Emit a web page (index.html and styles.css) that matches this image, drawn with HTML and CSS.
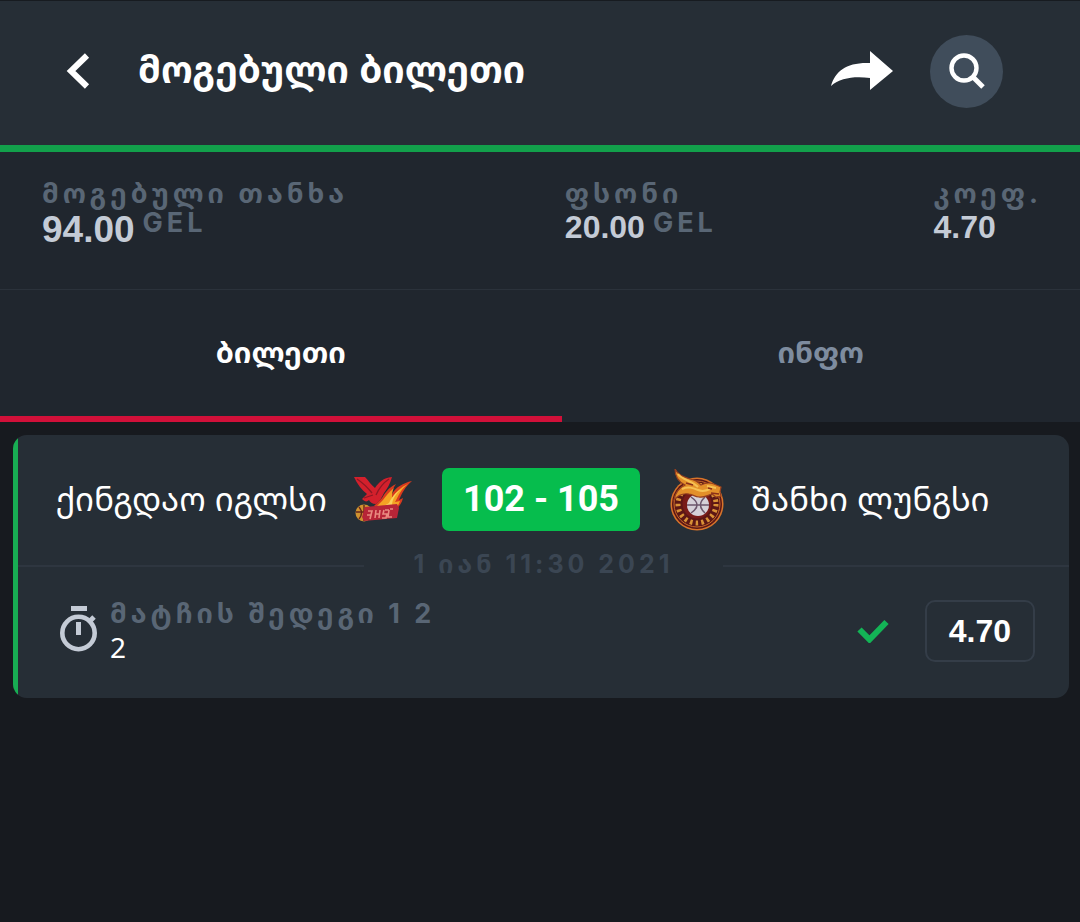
FILE: index.html
```html
<!DOCTYPE html>
<html lang="ka">
<head>
<meta charset="utf-8">
<meta name="viewport" content="width=device-width, initial-scale=1">
<title>მოგებული ბილეთი</title>
<link rel="stylesheet" href="styles.css">
</head>
<body>
<header class="topbar">
  <button class="icon-button back" type="button" aria-label="უკან">
    <svg width="24" height="36" viewBox="0 0 24 36"><path d="M21 2.500 5 18l16 15.500" fill="none" stroke="currentColor" stroke-width="6"/></svg>
  </button>
  <h1 class="title">მოგებული ბილეთი</h1>
  <button class="icon-button share" type="button" aria-label="გაზიარება">
    <svg width="64" height="40" viewBox="0 0 64 40"><path d="M40 0 63 20 40 39V27C24 25 10 27 1 35 5 20 17 11 40 12Z" fill="currentColor"/></svg>
  </button>
  <button class="icon-button search" type="button" aria-label="ძებნა">
    <svg width="36" height="36" viewBox="0 0 36 36"><circle cx="15" cy="15" r="12.5" fill="none" stroke="currentColor" stroke-width="4.4"/><path d="m24 24 10 10" stroke="currentColor" stroke-width="5"/></svg>
  </button>
</header>
<main>
  <dl class="summary">
    <div class="stat"><dt class="label">მოგებული თანხა</dt><dd class="amount amount-large">94.00<span class="label unit">GEL</span></dd></div>
    <div class="stat"><dt class="label">ფსონი</dt><dd class="amount">20.00<span class="label unit">GEL</span></dd></div>
    <div class="stat"><dt class="label">კოეფ.</dt><dd class="amount">4.70</dd></div>
  </dl>
  <nav class="tabs">
    <button class="tab tab-active" type="button">ბილეთი</button>
    <button class="tab" type="button">ინფო</button>
  </nav>
  <article class="card">
    <div class="match">
      <div class="team team-home">
        <span class="team-name">ქინგდაო იგლსი</span>
        <svg class="logo" width="58" height="54" viewBox="0 0 58 54">
          <path d="M58 8C49 10 42 14 38 21c0-4 2-7 4-10-8 4-11 9-14 14l-8 8 22 4c3-4 6-7 7-12l-4 2c3-7 6-13 13-19Z" fill="#d93a1e"/>
          <path d="M54 11c-7 3-12 8-16 14 0-4 0-7 2-10-5 4-8 8-11 12l-7 7 19 2c3-3 4-5 5-8l-5 1c4-7 6-13 13-18Z" fill="#f4a224"/>
          <path d="M47 16c-6 4-9 8-12 14l-7 4 10-1c0-7 4-12 9-17Z" fill="#fbd25a"/>
          <path d="M0 4h11c4 4 6 8 10 11 4-6 8-10 17-11-2 7-5 12-8 16-2 4-4 8-8 11-4 0-6-2-7-4-2 2-4 2-7-1l5-5C8 17 3 11 0 4Z" fill="#d3202c"/>
          <path d="M3 6c6 4 11 9 15 14M35 6c-6 4-10 9-13 16M10 25l9-3" fill="none" stroke="#8d1824" stroke-width="1.3"/>
          <circle cx="10" cy="40" r="8.500" fill="#cf922f"/><path d="M2 39h16M10 32v16M5 34q5 6 0 12" fill="none" stroke="#65261b" stroke-width="1.4"/>
          <path d="m11 34 32-3 2 4-2 10-33 3-2-4Z" fill="#b72537"/>
          <path d="M14 38h4l-1 4h-4m4 0-1 4m6-9-1 8m5-8-1 8m-4-4h4m6-4h4m-5 0-1 4h5m-1 0-1 4h-4m8-9h3m-4 1-1 7h4" fill="none" stroke="#e98a80" stroke-width="1.6"/>
        </svg>
      </div>
      <strong class="score">102 - 105</strong>
      <div class="team team-away">
        <svg class="logo" width="54" height="62" viewBox="0 0 54 62">
          <circle cx="27" cy="35" r="26.500" fill="#d8742a"/><circle cx="27" cy="35" r="25" fill="#5c1715"/><circle cx="27" cy="35" r="23" fill="none" stroke="#c96a2a" stroke-width="1"/>
          <circle cx="27" cy="35" r="19" fill="none" stroke="#d99136" stroke-width="5" stroke-dasharray="2.500 3.200"/>
          <circle cx="27" cy="35" r="14.500" fill="#781b18"/><circle cx="28" cy="36" r="11" fill="#d5d1d8"/>
          <path d="M17 36h22M21 28q12 8 0 16M35 28q-9 8 0 16" fill="none" stroke="#6b566b" stroke-width="1.500"/>
          <path d="M5 0c3 6 9 8 15 10 5 1 8 3 11 6 4-2 8-3 13-1l7 3-1 5 1 4-5 1-4-3c-4 1-8 4-13 3-4 0-7-3-10-3-6-1-11 1-15 6 1-7 5-12 11-15C9 13 5 8 5 0Z" fill="#e3902a" stroke="#97401f" stroke-width="1.200"/>
          <path d="M8 5c4 6 13 6 20 13M12 20c6-3 11-1 16 1s8 1 12-1M37 17l9 2" fill="none" stroke="#f6c153" stroke-width="2"/>
          <path d="m38 19 4 1m-1 4 8 1M16 14l7 2" fill="none" stroke="#8c3019" stroke-width="1.500"/>
        </svg>
        <span class="team-name">შანხი ლუნგსი</span>
      </div>
    </div>
    <div class="date-row"><time class="label date" datetime="2021-01-01T11:30">1 იან 11:30 2021</time></div>
    <div class="bet">
      <svg class="timer" width="38" height="46" viewBox="0 0 38 46"><path d="M11 2.500h16M18.500 16v13" fill="none" stroke="currentColor" stroke-width="5"/><circle cx="18.500" cy="27" r="16.200" fill="none" stroke="currentColor" stroke-width="4.600"/><path d="m29 16 5-5" stroke="currentColor" stroke-width="5"/></svg>
      <div class="pick"><span class="label">მატჩის შედეგი 1 2</span><span class="pick-value">2</span></div>
      <svg class="check" width="32" height="24" viewBox="0 0 32 24"><path d="m2.500 10.500 10 10L29.500 3" fill="none" stroke="currentColor" stroke-width="6"/></svg>
      <span class="odds">4.70</span>
    </div>
  </article>
</main>
</body>
</html>
```
FILE: styles.css
```css
* { box-sizing: border-box; }
body {
  margin: 0;
  min-height: 100vh;
  background: #171a1f;
  color: #fff;
  font-family: "Liberation Sans", "Noto Sans Georgian", "DejaVu Sans", sans-serif;
}
button { font: inherit; color: inherit; border: 0; background: none; padding: 0; cursor: pointer; }
svg { display: block; flex: none; }
.topbar {
  display: flex;
  align-items: center;
  min-height: 152px;
  padding: 0 77px 4px 66px;
  background: #262e36;
  border-top: 1px solid #171b20;
  border-bottom: 7px solid #12a04b;
}
.title { flex: 1; margin: 0 0 0 48px; font-size: 37px; line-height: 40px; }
.search {
  display: grid;
  place-items: center;
  width: 73px;
  height: 73px;
  margin-left: 36px;
  border-radius: 50%;
  background: #404d5b;
}
.summary {
  display: flex;
  justify-content: space-between;
  min-height: 138px;
  margin: 0;
  padding: 26px 38px 0 42px;
  background: #20262e;
  border-bottom: 1px solid #2b323b;
}
.label {
  color: #596675;
  font-family: Inter, "Noto Sans Georgian", "DejaVu Sans", sans-serif;
  font-size: 27px;
  font-weight: 700;
  line-height: 32px;
  letter-spacing: 4px;
}
.amount { display: flex; gap: 8px; margin: 0; color: #c4cbd6; font-size: 32px; font-weight: 700; line-height: 34px; }
.amount-large { font-size: 37px; line-height: 40px; }
.unit { line-height: 26px; }
.tabs { display: grid; grid-template-columns: 52fr 48fr; min-height: 132px; background: #20262e; }
.tab { padding-bottom: 4px; border-bottom: 6px solid transparent; color: #7e8c9f; font-size: 29px; font-weight: 700; }
.tab-active { border-color: #d11039; color: #fff; }
.card { margin: 13px 11px 0 13px; padding-bottom: 34px; background: linear-gradient(to right, #18ad53 5px, #262e36 5px); border-radius: 14px; }
.match { display: grid; grid-template-columns: 1fr auto 1fr; align-items: center; gap: 30px; padding: 33px 38px 0 38px; }
.team { display: flex; align-items: center; gap: 27px; }
.team-home { justify-content: flex-end; }
.team-name { font-size: 33px; line-height: 40px; white-space: nowrap; }
.score { padding: 0 21px; border-radius: 7px; background: #06bd4d; font-family: Roboto, sans-serif; font-size: 36px; line-height: 63px; white-space: nowrap; }
.date-row { display: flex; align-items: center; gap: 50px; margin: 17px 0 0 5px; }
.date-row::before, .date-row::after { content: ""; flex: 1; height: 2px; background: #2e3640; }
.date { padding-bottom: 4px; color: #3b4653; font-size: 25px; }
.bet { display: flex; align-items: center; padding: 14px 34px 0 47px; }
.timer { margin-bottom: 4px; color: #c4cbd6; }
.pick { display: flex; flex: 1; flex-direction: column; margin-left: 12px; }
.pick-value { font-family: "Noto Sans", sans-serif; font-size: 28px; line-height: 34px; }
.check { color: #13b456; }
.odds { margin-left: 36px; padding: 0 22px; border: 2px solid #343d48; border-radius: 10px; font-size: 32px; font-weight: 700; line-height: 58px; }
```
